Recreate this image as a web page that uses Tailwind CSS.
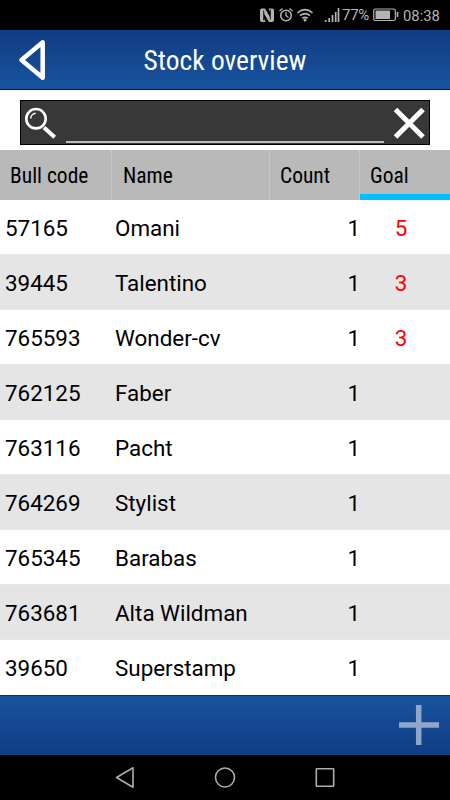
<!DOCTYPE html>
<html lang="en">
<head>
  <meta charset="UTF-8" />
  <meta name="viewport" content="width=device-width, initial-scale=1.0" />
  <title>Stock overview</title>
  <script src="https://cdn.jsdelivr.net/npm/@tailwindcss/browser@4"></script>
</head>
<body class="bg-black">
<div class="flex h-[800px] w-[450px] flex-col overflow-hidden bg-white font-['Roboto',sans-serif] text-black">

  <!-- Status bar -->
  <div class="flex h-[30px] shrink-0 items-center bg-black pl-[260px] text-[#b4b4b4]">
    <svg class="h-[30px] w-[81px] shrink-0" viewBox="260 0 81 30" fill="none" stroke="currentColor">
      <path d="M262 8.500h3l5 8.500V12l-1.500-3.500h3.500q2 0 2 2v9.500q0 2-2 2h-3l-5-8.500V18.500l1.500 3.500h-3.500q-2 0-2-2v-9.500q0-2 2-2z" fill="currentColor" stroke="none" />
      <path d="M263.700 10.500v10M270.300 9.500v10" stroke="#000" stroke-width="0.900" />
      <circle cx="286" cy="15.500" r="5.300" stroke-width="1.500" />
      <path d="M286 12v3.500l2.500 2M279.500 11l3-2.500M292.500 11l-3-2.500" stroke-width="1.300" />
      <path d="M297.500 12.800q7.500-6.500 15 0M300 15.700q5-4 10 0M302.300 18.300q2.700-2 5.400 0" stroke-width="1.700" />
      <circle cx="305" cy="20" r="1.500" fill="currentColor" stroke="none" />
      <path d="M325.700 20v2M329.200 18v4M332.500 15v7M335.700 12v10M338.500 8v14" stroke-width="1.700" />
    </svg>
    <span class="w-8 pl-px text-[15px] leading-none tracking-[-0.300px]">77%</span>
    <svg class="h-[30px] w-[27px] shrink-0" viewBox="373 0 27 30" fill="none" stroke="currentColor">
      <rect x="373.700" y="9" width="21.600" height="11.500" rx="1.500" stroke-width="1.200" />
      <path d="M375.500 10.500h14.500v8.500h-14.500z" fill="currentColor" stroke="none" />
      <path d="M397.500 12v5" stroke-width="1.700" />
    </svg>
    <span class="ml-[3px] pt-0.5 text-[14.800px] leading-none">08:38</span>
  </div>

  <!-- Title bar -->
  <header class="grid h-[60px] shrink-0 grid-cols-[64px_1fr_64px] items-center border-b border-[#000c80] bg-linear-to-b from-[#113c82] to-[#17549e] text-white">
    <svg class="h-[59px] w-16" viewBox="0 30 64 59" fill="none" stroke="currentColor" stroke-width="4.500" stroke-linejoin="round">
      <path d="M21.500 60L42.700 42.300V77.700z" />
    </svg>
    <h1 class="pt-[3px] text-center text-[27.500px] leading-none font-stretch-condensed font-['Roboto_Condensed','Roboto',sans-serif]">Stock overview</h1>
  </header>

  <!-- Search -->
  <div class="h-[60px] shrink-0 px-5 pt-2.5">
    <div class="flex h-[45px] border border-black bg-[#383838] text-white">
      <svg class="h-[43px] w-[45px]" viewBox="21 101 45 43" fill="none" stroke="currentColor">
        <circle cx="36" cy="118.700" r="9.700" stroke-width="2.600" />
        <path d="M30.700 118.500a5.500 5.500 0 0 1 5-5.300" stroke-width="1.500" />
        <path d="M44 127.500l10.700 9.800" stroke-width="4" />
      </svg>
      <div class="h-[42px] w-[318px] border-b-2 border-[#bdbdbd]"></div>
      <svg class="h-[43px] w-[45px]" viewBox="384 101 45 43" fill="none" stroke="currentColor" stroke-width="5">
        <path d="M395.500 109.500l27.500 27.500M423 109.500l-27.500 27.500" />
      </svg>
    </div>
  </div>

  <!-- Table -->
  <div class="grid h-[50px] shrink-0 grid-cols-[112px_158px_90px_90px] bg-[#b9b9b9] text-[21.500px] leading-[52px] font-stretch-condensed font-['Roboto_Condensed','Roboto',sans-serif]">
    <div class="h-[50px] border-r border-[#c8c8c8] pl-2.5">Bull code</div>
    <div class="h-[50px] border-r border-[#c8c8c8] pl-[11px]">Name</div>
    <div class="h-[50px] border-r border-[#c8c8c8] pl-2.5">Count</div>
    <div class="h-[50px] border-b-6 border-[#00bfff] pl-2.5">Goal</div>
  </div>
  <div id="rows" class="h-[495px] shrink-0 text-[22.400px]"></div>

  <!-- Bottom bar -->
  <div class="flex h-[60px] shrink-0 justify-end border-t border-[#0c3478] bg-linear-to-b from-[#17549e] to-[#113c82]">
    <svg class="h-[59px] w-[60px]" viewBox="390 696 60 59" fill="none" stroke="#8ea6cb" stroke-width="5.500">
      <path d="M399 725h40M418.700 705v40" />
    </svg>
  </div>

  <!-- Navigation -->
  <div class="h-[45px] shrink-0 bg-black">
    <svg class="h-[45px] w-[450px]" viewBox="0 755 450 45" fill="none" stroke="#adadad" stroke-width="1.600" stroke-linejoin="round">
      <path d="M116.500 777.500l16.500-9.700v19.400z" />
      <circle cx="225" cy="777.500" r="9.500" />
      <rect x="316.300" y="768.800" width="17.400" height="17.400" rx="0.500" />
    </svg>
  </div>
</div>

<script>
  const bulls = [
    ["57165", "Omani", 1, 5],
    ["39445", "Talentino", 1, 3],
    ["765593", "Wonder-cv", 1, 3],
    ["762125", "Faber", 1, ""],
    ["763116", "Pacht", 1, ""],
    ["764269", "Stylist", 1, ""],
    ["765345", "Barabas", 1, ""],
    ["763681", "Alta Wildman", 1, ""],
    ["39650", "Superstamp", 1, ""]
  ];

  document.getElementById("rows").innerHTML = bulls.map(([code, name, count, goal]) => `
    <div class="grid h-[55px] grid-cols-[110px_160px_90px_90px] border-b border-[#e9e9e9] pt-px leading-[55px] last:border-white odd:bg-white even:bg-[#e5e5e5]">
      <div class="pl-[5px]">${code}</div>
      <div class="pl-[5px]">${name}</div>
      <div class="text-right">${count}</div>
      <div class="pr-2 text-center text-[#ff0000]">${goal}</div>
    </div>`).join("");
</script>
</body>
</html>
